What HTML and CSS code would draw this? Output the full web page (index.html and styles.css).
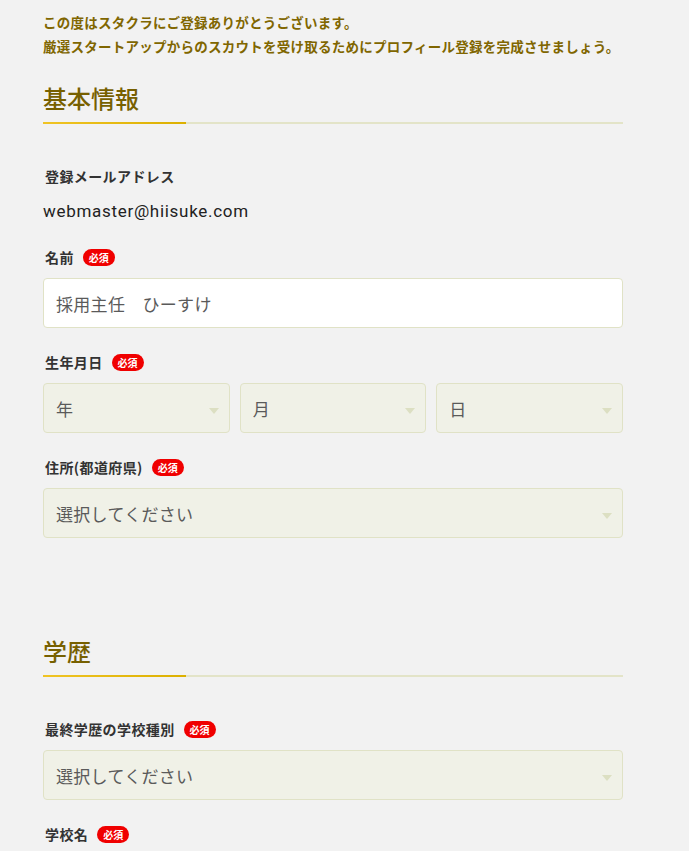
FILE: index.html
```html
<!DOCTYPE html>
<html lang="ja">
<head>
  <meta charset="UTF-8" />
  <meta name="viewport" content="width=device-width, initial-scale=1.0"/>
  <title>プロフィール登録 – スタクラ</title>
  <link rel="stylesheet" href="styles.css">
</head>
<body>

  <main class="profile">
    <p class="intro">この度はスタクラにご登録ありがとうございます。<br>厳選スタートアップからのスカウトを受け取るためにプロフィール登録を完成させましょう。</p>

    <!-- 基本情報 -->
    <section class="section">
      <h2 class="section-title">基本情報</h2>

      <div class="fields">
        <div class="field">
          <div class="label">登録メールアドレス</div>
          <p class="value">webmaster@hiisuke.com</p>
        </div>

        <div class="field">
          <div class="label">名前 <span class="required">必須</span></div>
          <input class="text-input" type="text" value="採用主任　ひーすけ" />
        </div>

        <div class="field">
          <div class="label">生年月日 <span class="required">必須</span></div>
          <div class="date-row">
            <div class="select-wrap">
              <select class="select"><option>年</option></select>
            </div>
            <div class="select-wrap">
              <select class="select"><option>月</option></select>
            </div>
            <div class="select-wrap">
              <select class="select"><option>日</option></select>
            </div>
          </div>
        </div>

        <div class="field">
          <div class="label">住所(都道府県) <span class="required">必須</span></div>
          <div class="select-wrap">
            <select class="select"><option>選択してください</option></select>
          </div>
        </div>
      </div>
    </section>

    <!-- 学歴 -->
    <section class="section section-edu">
      <h2 class="section-title">学歴</h2>

      <div class="fields">
        <div class="field">
          <div class="label">最終学歴の学校種別 <span class="required">必須</span></div>
          <div class="select-wrap">
            <select class="select"><option>選択してください</option></select>
          </div>
        </div>

        <div class="field">
          <div class="label">学校名 <span class="required">必須</span></div>
        </div>
      </div>
    </section>
  </main>

</body>
</html>
```

FILE: styles.css
```css
body {
  margin: 0;
  background: #f2f2f2;
  color: #333;
  font-family: "Noto Sans CJK JP", "Noto Sans", sans-serif;
}

.profile {
  width: 580px;
  margin: 0 43px;
  padding-top: 10px;
}

.intro {
  margin: 0 0 22px;
  font-size: 13.5px;
  font-weight: bold;
  line-height: 24px;
  letter-spacing: 0.25px;
  color: #806600;
}

.section-edu {
  margin-top: 95px;
}

.section-title {
  position: relative;
  margin: 0;
  padding-bottom: 6px;
  font-size: 24px;
  font-weight: 500;
  line-height: 36px;
  color: #776000;
  border-bottom: 2px solid #e3e4c8;
}

.section-title::after {
  content: "";
  position: absolute;
  left: 0;
  bottom: -2px;
  width: 143px;
  height: 2px;
  background: linear-gradient(to right, #f0c425, #dcb000);
}

.fields {
  margin-top: 42px;
}

.field {
  margin-bottom: 24px;
}

.field:last-child {
  margin-bottom: 0;
}

.label {
  display: flex;
  align-items: center;
  gap: 9px;
  margin: 0 0 11px 2px;
  font-size: 14px;
  font-weight: bold;
  line-height: 20px;
  letter-spacing: 0.4px;
  color: #333;
}

.required {
  display: inline-block;
  padding: 0 6px;
  height: 17px;
  line-height: 17px;
  font-size: 10px;
  font-weight: bold;
  letter-spacing: 0;
  color: #fff;
  background: #f00000;
  border-radius: 9px;
}

.value {
  margin: 0;
  padding-top: 2px;
  font-family: Roboto, "Noto Sans CJK JP", sans-serif;
  font-size: 17px;
  line-height: 24px;
  letter-spacing: 0.7px;
  color: #222;
}

.text-input,
.select {
  box-sizing: border-box;
  width: 100%;
  height: 50px;
  padding: 0 12px;
  font-family: "Noto Sans CJK JP", sans-serif;
  font-size: 17px;
  letter-spacing: 0.3px;
  color: #5a5a5a;
  border: 1px solid #e0e2c6;
  border-radius: 4px;
  outline: none;
}

.text-input {
  background: #fff;
}

.date-row {
  display: grid;
  grid-template-columns: 1fr 1fr 1fr;
  gap: 10px;
}

.select-wrap {
  position: relative;
}

.select {
  appearance: none;
  -webkit-appearance: none;
  background: #f0f1e7;
}

.select-wrap::after {
  content: "";
  position: absolute;
  right: 11px;
  top: 50%;
  border-left: 5px solid transparent;
  border-right: 5px solid transparent;
  border-top: 6px solid #dcdfc2;
  pointer-events: none;
}
```
